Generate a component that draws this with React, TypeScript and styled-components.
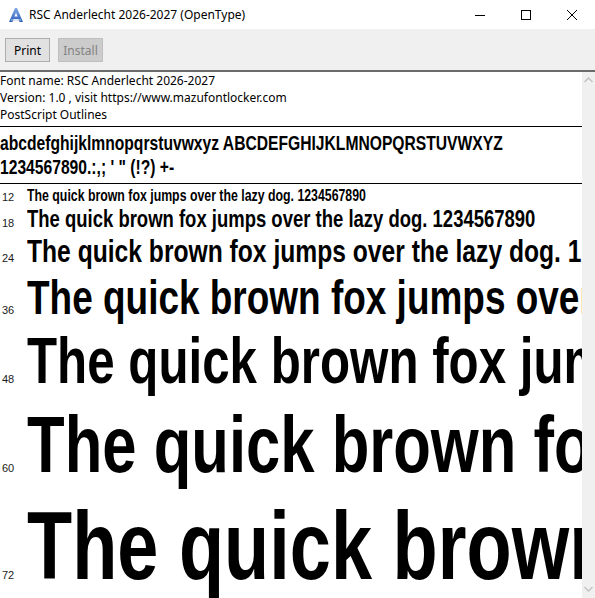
import React from 'react';
import styled, { createGlobalStyle } from 'styled-components';

const GlobalStyle = createGlobalStyle`
  html, body {
    margin: 0;
    padding: 0;
    background: #ffffff;
  }
  body {
    font-family: "Noto Sans", "Open Sans", sans-serif;
  }
`;

// --- Janela ---

const Window = styled.div`
  width: 595px;
  height: 598px;
  overflow: hidden;
  display: flex;
  flex-direction: column;
  background: #ffffff;
`;

const TitleBar = styled.div`
  height: 29px;
  flex-shrink: 0;
  display: flex;
  align-items: center;
  background: #ffffff;
  padding-left: 8px;
`;

const Title = styled.span`
  margin-left: 5px;
  font-size: 12px;
  color: #000;
  white-space: nowrap;
`;

const WindowControls = styled.div`
  margin-left: auto;
  display: flex;
  height: 100%;
`;

const ControlButton = styled.div`
  width: 46px;
  height: 100%;
  display: flex;
  align-items: center;
  justify-content: center;
`;

const Toolbar = styled.div`
  height: 41px;
  flex-shrink: 0;
  box-sizing: border-box;
  background: #f0f0f0;
  display: flex;
  align-items: flex-start;
  gap: 8px;
  padding: 9px 5px 0;
`;

const Button = styled.button<{ $disabled?: boolean }>`
  width: 45px;
  height: 24px;
  box-sizing: border-box;
  font-family: "Noto Sans", "Open Sans", sans-serif;
  font-size: 12px;
  padding: 0;
  border: 1px solid ${p => (p.$disabled ? '#bfbfbf' : '#adadad')};
  background: ${p => (p.$disabled ? '#cccccc' : '#e1e1e1')};
  color: ${p => (p.$disabled ? '#838383' : '#000000')};
  border-radius: 0;
`;

const Body = styled.div`
  flex: 1;
  display: flex;
  border-top: 2px solid #6b6b6b;
  min-height: 0;
`;

const Content = styled.div`
  flex: 1;
  overflow: hidden;
  background: #ffffff;
`;

const Scrollbar = styled.div`
  width: 13px;
  flex-shrink: 0;
  background: #f0f0f0;
  display: flex;
  flex-direction: column;
  justify-content: space-between;
  align-items: center;
  padding: 5px 0 6px;
`;

// --- Conteúdo ---

const Info = styled.div`
  font-size: 12px;
  line-height: 17px;
  color: #000;
  white-space: nowrap;
`;

const Rule = styled.div<{ $top: number }>`
  height: 1px;
  background: #000;
  margin-top: ${p => p.$top}px;
`;

const Charset = styled.div`
  margin-top: 4px;
  font-family: "Liberation Sans", Arial, sans-serif;
  font-weight: bold;
  font-size: 21px;
  line-height: 24px;
  white-space: nowrap;
  color: #000;
`;

const Condensed = styled.span`
  display: inline-block;
  transform: scaleX(0.745);
  transform-origin: left center;
`;

const Samples = styled.div`
  padding-top: 3px;
`;

const Row = styled.div<{ $size: number }>`
  display: flex;
  align-items: baseline;
  height: ${p => p.$size * 1.15}px;
  line-height: ${p => p.$size * 1.15}px;
  white-space: nowrap;
  overflow: hidden;
`;

const SizeLabel = styled.span`
  width: 27px;
  flex-shrink: 0;
  padding-left: 2px;
  box-sizing: border-box;
  font-family: "Liberation Sans", Arial, sans-serif;
  font-size: 11px;
  color: #1a1a1a;
`;

const SampleText = styled.span<{ $size: number }>`
  display: inline-block;
  font-family: "Liberation Sans", Arial, sans-serif;
  font-weight: bold;
  font-size: ${p => p.$size}px;
  color: #000;
  transform: scaleX(0.77);
  transform-origin: left center;
`;

const sizes = [12, 18, 24, 36, 48, 60, 72];
const sample = 'The quick brown fox jumps over the lazy dog. 1234567890';

function FontIcon() {
  return (
    <svg width="16" height="16" viewBox="0 0 16 16">
      <defs>
        <linearGradient id="fi" x1="0" y1="0" x2="0" y2="1">
          <stop offset="0" stopColor="#7fa8e6" />
          <stop offset="1" stopColor="#2f5fb8" />
        </linearGradient>
      </defs>
      <path d="M7 1 L9 1 L15 15 L11.5 15 L10.3 12 L5.7 12 L4.5 15 L1 15 Z" fill="url(#fi)" />
      <path d="M6.5 9.5 L9.5 9.5 L8 5.5 Z" fill="#ffffff" />
      <path d="M3 13 L13 13" stroke="#b9cdf0" strokeWidth="1" />
    </svg>
  );
}

function App() {
  return (
    <Window>
      <GlobalStyle />
      <TitleBar>
        <FontIcon />
        <Title>RSC Anderlecht 2026-2027 (OpenType)</Title>
        <WindowControls>
          <ControlButton>
            <svg width="10" height="10" viewBox="0 0 10 10">
              <path d="M0 5.5 H10" stroke="#000" strokeWidth="1" />
            </svg>
          </ControlButton>
          <ControlButton>
            <svg width="10" height="10" viewBox="0 0 10 10">
              <rect x="0.5" y="0.5" width="9" height="9" fill="none" stroke="#000" strokeWidth="1" />
            </svg>
          </ControlButton>
          <ControlButton>
            <svg width="10" height="10" viewBox="0 0 10 10">
              <path d="M0 0 L10 10 M10 0 L0 10" stroke="#000" strokeWidth="1" />
            </svg>
          </ControlButton>
        </WindowControls>
      </TitleBar>

      <Toolbar>
        <Button>Print</Button>
        <Button $disabled disabled>Install</Button>
      </Toolbar>

      <Body>
        <Content>
          <Info>
            <div>Font name: RSC Anderlecht 2026-2027</div>
            <div>Version: 1.0 , visit https://www.mazufontlocker.com</div>
            <div>PostScript Outlines</div>
          </Info>
          <Rule $top={3} />
          <Charset>
            <div><Condensed>abcdefghijklmnopqrstuvwxyz ABCDEFGHIJKLMNOPQRSTUVWXYZ</Condensed></div>
            <div><Condensed>1234567890.:,; ' " (!?) +-</Condensed></div>
          </Charset>
          <Rule $top={4} />
          <Samples>
            {sizes.map(s => {
              const px = Math.round((s * 96) / 72);
              return (
                <Row key={s} $size={px}>
                  <SizeLabel>{s}</SizeLabel>
                  <SampleText $size={px}>{sample}</SampleText>
                </Row>
              );
            })}
          </Samples>
        </Content>
        <Scrollbar>
          <svg width="9" height="6" viewBox="0 0 9 6">
            <path d="M0.5 5 L4.5 1 L8.5 5" fill="none" stroke="#c2c2c2" strokeWidth="1.5" />
          </svg>
          <svg width="9" height="6" viewBox="0 0 9 6">
            <path d="M0.5 1 L4.5 5 L8.5 1" fill="none" stroke="#c2c2c2" strokeWidth="1.5" />
          </svg>
        </Scrollbar>
      </Body>
    </Window>
  );
}

export default App;
